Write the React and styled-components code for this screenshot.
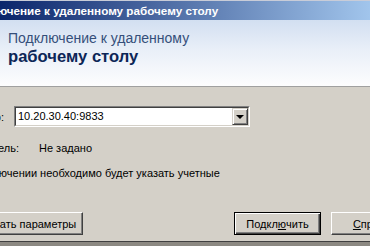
import React from 'react';
import styled, { createGlobalStyle } from 'styled-components';

const GlobalStyle = createGlobalStyle`
html, body {
    margin: 0;
    padding: 0;
    background: #d4d0c8;
    overflow: hidden;
}
`;

const Viewport = styled.div`
width: 370px;
height: 246px;
overflow: hidden;
background: #d4d0c8;
font-family: "Liberation Sans", Arial, sans-serif;
font-size: 11px;
color: #000;
`;

const Window = styled.div`
width: 480px;
height: 246px;
margin-left: -60px;
display: flex;
flex-direction: column;
`;

const TitleBar = styled.div`
height: 19px;
border-top: 1px solid #c8ccd8;
background: linear-gradient(to right, #0a246a 0%, #0a246a 12%, #a6caf0 92%);
display: flex;
align-items: center;
padding-left: 21px;
`;

const TitleText = styled.span`
color: #fff;
font-weight: bold;
font-size: 11.7px;
white-space: nowrap;
`;

const Banner = styled.div`
height: 67px;
border-bottom: 1px solid #a0a0a0;
background: linear-gradient(to bottom, #d2dff1 0%, #e9eff8 45%, #fdfdfe 100%);
padding-left: 68px;
display: flex;
flex-direction: column;
padding-top: 10px;
box-sizing: border-box;
`;

const BannerLine = styled.div`
font-size: ${p => p.$big ? '16.6px' : '14px'};
font-weight: ${p => p.$big ? 'bold' : 'normal'};
color: ${p => p.$big ? '#0c2657' : '#354f7a'};
line-height: ${p => p.$big ? '20px' : '17px'};
white-space: nowrap;
`;

const Body = styled.div`
flex: 1;
display: flex;
flex-direction: column;
padding-top: 19px;
`;

const Row = styled.div`
display: flex;
align-items: center;
min-height: ${p => p.$h || 13}px;
margin-top: ${p => p.$mt || 0}px;
`;

const Label = styled.div`
width: ${p => p.$w}px;
flex: none;
text-align: right;
white-space: nowrap;
padding-right: ${p => p.$pr || 0}px;
box-sizing: border-box;
`;

const Combo = styled.div`
width: 236px;
height: 21px;
box-sizing: border-box;
border: 1px solid;
border-color: #808080 #fff #fff #808080;
display: flex;
`;

const ComboInner = styled.div`
flex: 1;
display: flex;
border: 1px solid;
border-color: #404040 #d4d0c8 #d4d0c8 #404040;
background: #fff;
`;

const ComboText = styled.div`
flex: 1;
padding-left: 2px;
line-height: 17px;
`;

const DropButton = styled.div`
width: 16px;
box-sizing: border-box;
background: #d4d0c8;
border: 1px solid;
border-color: #d4d0c8 #404040 #404040 #d4d0c8;
box-shadow: inset 1px 1px 0 #fff, inset -1px -1px 0 #808080;
display: flex;
align-items: center;
justify-content: center;
`;

const Arrow = styled.div`
width: 0;
height: 0;
border-left: 4px solid transparent;
border-right: 4px solid transparent;
border-top: 4px solid #000;
`;

const Value = styled.div`
white-space: nowrap;
`;

const Note = styled.div`
width: 275px;
padding-left: 6px;
line-height: 13px;
height: 13px;
`;

const Buttons = styled.div`
display: flex;
margin-top: 32px;
height: 23px;
`;

const Button = styled.div`
width: ${p => p.$w}px;
margin-left: ${p => p.$ml || 0}px;
height: 23px;
box-sizing: border-box;
background: #d4d0c8;
border: 1px solid;
border-color: ${p => p.$default ? '#000' : '#fff #404040 #404040 #fff'};
box-shadow: ${p => p.$default
    ? 'inset 1px 1px 0 #fff, inset -1px -1px 0 #404040, inset -2px -2px 0 #808080'
    : 'inset -1px -1px 0 #808080'};
display: flex;
align-items: center;
justify-content: center;
white-space: nowrap;
flex: none;
`;

const U = styled.span`
text-decoration: underline;
`;

const Footer = styled.div`
height: 4px;
margin-top: auto;
border-top: 1px solid #404040;
background: #8c8982;
`;

export default function App() {
    return (
        <Viewport>
            <GlobalStyle />
            <Window>
                <TitleBar>
                    <TitleText>Подключение к удаленному рабочему столу</TitleText>
                </TitleBar>
                <Banner>
                    <BannerLine>Подключение к удаленному</BannerLine>
                    <BannerLine $big>рабочему столу</BannerLine>
                </Banner>
                <Body>
                    <Row $h={21}>
                        <Label $w={74} $pr={10}>Компьютер:</Label>
                        <Combo>
                            <ComboInner>
                                <ComboText>10.20.30.40:9833</ComboText>
                                <DropButton><Arrow /></DropButton>
                            </ComboInner>
                        </Combo>
                    </Row>
                    <Row $mt={14}>
                        <Label $w={99} $pr={20}>Пользователь:</Label>
                        <Value>Не задано</Value>
                    </Row>
                    <Row $mt={13}>
                        <Note>При подключении необходимо будет указать учетные данные.</Note>
                    </Row>
                    <Buttons>
                        <Button $w={120} $ml={23}>Показать параметры</Button>
                        <Button $w={87} $ml={151} $default>Подкл<U>ю</U>чить</Button>
                        <Button $w={87} $ml={10}><U>С</U>правка</Button>
                    </Buttons>
                    <Footer />
                </Body>
            </Window>
        </Viewport>
    );
}
